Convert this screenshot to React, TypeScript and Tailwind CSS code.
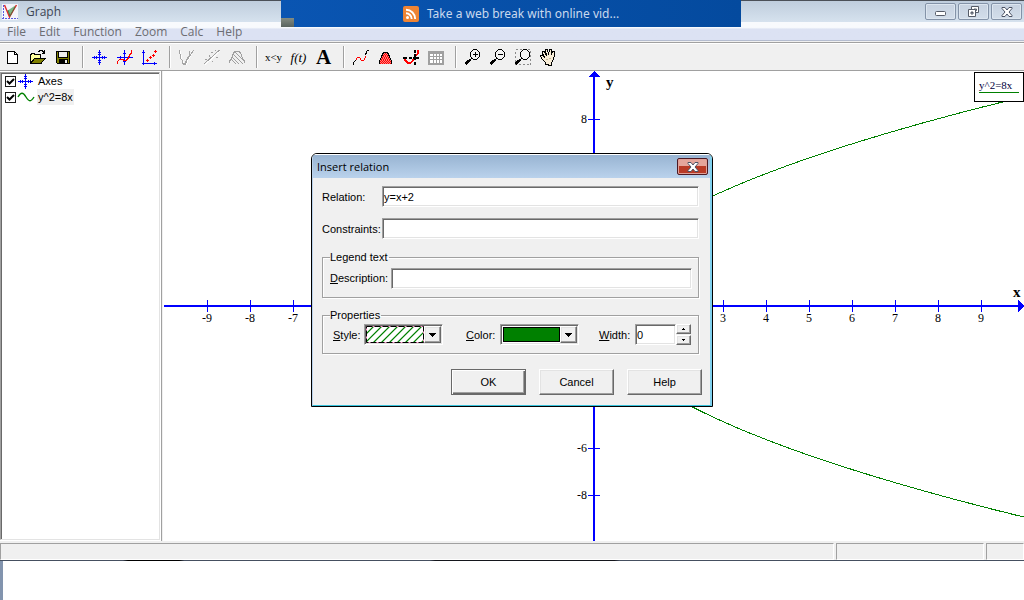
import React from 'react';

const MENUS = ['File', 'Edit', 'Function', 'Zoom', 'Calc', 'Help'];

function Icon({ children }: { children: React.ReactNode }) {
  return (
    <svg width="19" height="18" viewBox="0 0 19 18" fill="none" shapeRendering="crispEdges" aria-hidden="true">
      {children}
    </svg>
  );
}

const AXES_PATH = 'M2 9.5h15M9.5 2v15M4.5 8v3M6.5 8v3M12.5 8v3M14.5 8v3M8 4.5h3M8 6.5h3M8 12.5h3M8 14.5h3';

function Magnifier() {
  return (
    <>
      <path d="M9 10l-2 2" stroke="#000" strokeWidth="1" />
      <path d="M7.500 11.500L2.500 16" stroke="#000" strokeWidth="2.500" />
      <path d="M10.500 1.500h3l3 3v4l-3 3h-3l-3-3v-4z" fill="#f4f4f4" stroke="#000" />
    </>
  );
}

const GROUPS: { label: string; icon: React.ReactNode }[][] = [
  [
    {
      label: 'New',
      icon: (
        <Icon>
          <path d="M4.500 3.500h7l3 3v9h-10z" fill="#fff" stroke="#000" />
          <path d="M11.500 3.500v3h3" stroke="#000" />
        </Icon>
      ),
    },
    {
      label: 'Open',
      icon: (
        <Icon>
          <path d="M2.500 15.500v-9h1v-1h3v1h6v3" fill="#ffff9c" stroke="#000" />
          <path d="M2.500 15.500l4-5h10.500l-4 5z" fill="#808000" stroke="#000" />
          <path d="M10 3.500h1v-1h3v1h1v1h1M16.500 2v4M14 5.500h3" stroke="#000" />
        </Icon>
      ),
    },
    {
      label: 'Save',
      icon: (
        <Icon>
          <path d="M3.500 3.500h13v12h-12l-1-1z" fill="#808000" stroke="#000" />
          <path d="M6 4h8v5H6z" fill="#efefef" />
          <path d="M5.500 4v5.500h9V4" stroke="#000" />
          <path d="M6 11h9v5H6z" fill="#000" />
          <path d="M12 12h2v3h-2z" fill="#efefef" />
        </Icon>
      ),
    },
  ],
  [
    { label: 'Axes', icon: <Icon><path d={AXES_PATH} stroke="#00f" /></Icon> },
    {
      label: 'Insert function',
      icon: (
        <Icon>
          <path d="M2 9.500h16M9.500 2v15M5.500 8v3M13.500 8v3M8 5.500h3M8 13.500h3" stroke="#00f" />
          <path d="M2.500 16v-2l2-3h2l2 1h3l2-2 1-3 2-2v-3" stroke="#f00" />
        </Icon>
      ),
    },
    {
      label: 'Insert point series',
      icon: (
        <Icon>
          <path d="M3.500 2v15M2 15.500h15M2 4.500h3M14.500 14v3" stroke="#00f" />
          <path d="M6 12.500h3M7.500 11v3M9 9.500h3M10.500 8v3M12 7.500h3M13.500 6v3M14 3.500h3M15.500 2v3" stroke="#f00" />
        </Icon>
      ),
    },
  ],
  [
    {
      label: 'Insert tangent',
      icon: (
        <Icon>
          <path d="M3.500 3v3l1 2v3l2 3v2h3l1-3 2-3 2-4v-3M7.500 17l3-6 3-3 3-6" stroke="#fff" />
          <path d="M2.500 2v3l1 2v3l2 3v2l1 1h2l1-3 2-3 1-4v-3M7.500 16l3-6 3-3 3-5" stroke="#a5a5a5" />
        </Icon>
      ),
    },
    {
      label: 'Insert trendline',
      icon: (
        <Icon>
          <path d="M3 17L18 3" stroke="#fff" />
          <path d="M2 16L17.500 2" stroke="#a0a0a0" />
          <path d="M3 11h2v1H3zM7 7h1v2H7zM9 4h2v1H9zM10 13h1v1h-1zM14 9h2v1h-2zM13 2h1v1h-1z" fill="#a0a0a0" />
        </Icon>
      ),
    },
    {
      label: 'Insert shading',
      icon: (
        <Icon>
          <path d="M2.500 15v-2l2-2 2-6 2-2h3l2 2 2 5 2 3v2M6 6l10 10M5 9l7 7M4 11l5 5M8 4l9 9" stroke="#a0a0a0" />
        </Icon>
      ),
    },
  ],
  [
    { label: 'Insert relation', icon: <span className="font-['Liberation_Serif',serif] text-[11px] leading-none">x&lt;y</span> },
    { label: 'Custom functions', icon: <span className="font-['Liberation_Serif',serif] text-[13px] italic leading-none">f(t)</span> },
    { label: 'Insert label', icon: <span className="font-['Liberation_Serif',serif] text-[21px] font-bold leading-none">A</span> },
  ],
  [
    {
      label: 'Length of path',
      icon: (
        <Icon>
          <path d="M4.500 12.500l2-3h2l2 3h2l2-3v-2" stroke="#f00" />
          <path d="M2.500 16.500v-2l2-2M14.500 7l1-3 1-2h1" stroke="#000" />
        </Icon>
      ),
    },
    {
      label: 'Area',
      icon: (
        <Icon>
          <path d="M3.500 16v-3l2-4 1-3 2-2h2l2 2 1 3 2 4v3z" fill="#ff8080" />
          <path
            d="M7 5.500h5M7 7.500h5M6 9.500h7M5 11.500h9M4 13.500h11M4 15.500h11M8 6.500h4M7 8.500h6M6 10.500h8M5 12.500h10M5 14.500h10"
            stroke="#f00"
            strokeDasharray="1 1"
          />
          <path d="M3.500 16v-3l2-4 1-3 2-2h2l2 2 1 3 2 4v3" stroke="#000" />
        </Icon>
      ),
    },
    {
      label: 'Derivative',
      icon: (
        <Icon>
          <path d="M2 9h4v2H2zM8 9h3v2H8zM12 9h6v2h-6zM13 2h2v3h-2zM13 6h2v6h-2zM13 14h2v3h-2z" fill="#000" />
          <path d="M3.500 11l2 3 2 1h2l2-2 2-4 3-3v-4" stroke="#f00" strokeWidth="2" />
          <path d="M12 9h6v2h-6zM13 6h2v6h-2z" fill="#000" />
        </Icon>
      ),
    },
    {
      label: 'Table',
      icon: (
        <Icon>
          <path d="M2 3h16v14H2z" fill="#a0a0a0" />
          <path d="M4 6h12v9H4z" fill="#fff" />
          <path d="M4 8.500h12M4 11.500h12M7.500 6v9M10.500 6v9M13.500 6v9" stroke="#a0a0a0" />
        </Icon>
      ),
    },
  ],
  [
    { label: 'Zoom in', icon: <Icon><Magnifier /><path d="M10 6.500h5M12.500 4v5" stroke="#000" /></Icon> },
    { label: 'Zoom out', icon: <Icon><Magnifier /><path d="M10 6.500h5" stroke="#000" /></Icon> },
    { label: 'Zoom window', icon: <Icon><path d="M2.500 1.500h15v15h-15z" stroke="#8a8a8a" strokeDasharray="2 2" /><Magnifier /></Icon> },
    {
      label: 'Move',
      icon: (
        <Icon>
          <path
            d="M7.500 16.500v-2l-3-3-2-3v-1h2l2 2-2-4v-2h2l2 4-1-4v-2h2l1 5 1-5h2v5l1-3h2v4l-1 4-2 3v3z"
            fill="#f7ecd6"
            stroke="#000"
          />
          <path d="M8 11l2 1M11 10l2 1" stroke="#c8b89a" />
        </Icon>
      ),
    },
  ],
];

function Toolbar() {
  return (
    <div className="flex h-[26px] shrink-0 items-stretch bg-[#f0f0f0]">
      {GROUPS.map((group, g) => (
        <React.Fragment key={g}>
          {g > 0 && <div className="my-[2px] mr-[3px] ml-[7px] w-[2px] border-r border-l border-r-white border-l-[#a0a0a0]" />}
          {group.map((b) => (
            <button key={b.label} type="button" aria-label={b.label} className="flex w-[25px] items-center justify-center">
              {b.icon}
            </button>
          ))}
        </React.Fragment>
      ))}
    </div>
  );
}

function WindowButton({ label, children }: { label: string; children: React.ReactNode }) {
  return (
    <button
      type="button"
      aria-label={label}
      className="flex h-[17px] w-[31px] items-center justify-center rounded-[2px] border border-[#8493a8] bg-linear-to-b from-[#c6d1e0] to-[#d3deea] shadow-[inset_0_0_0_1px_#dde6f0]"
    >
      {children}
    </button>
  );
}

function TitleBar() {
  return (
    <header className="flex h-[22px] shrink-0 items-center justify-between border-t border-[#4b5058] bg-linear-to-b from-[#bfcddd] to-[#d6e2ee] pr-[2px] pl-[2px]">
      <div className="flex items-center gap-[8px]">
        <svg width="16" height="16" viewBox="0 0 16 16" fill="none" aria-hidden="true">
          <path d="M0 0h16v16H0z" fill="#f4f4fb" />
          <path d="M5 7l9-6-6 12z" fill="#7cb787" />
          <path d="M1.500 1v14.500M0 14.500h16" stroke="#5a5ae0" strokeDasharray="2 1" />
          <path d="M2.500 1l5 12L14.500 1" stroke="#e02828" strokeWidth="1.400" />
          <path d="M6 6l2 6 5-9" stroke="#2f7a45" strokeWidth=".8" />
        </svg>
        <span className="text-[12px] leading-[20px] text-[#3c4654]">Graph</span>
      </div>
      <div className="flex gap-[2px]">
        <WindowButton label="Minimize">
          <svg width="13" height="9" viewBox="0 0 13 9"><rect x="1.500" y="4.500" width="10" height="4" rx="1" fill="#fff" stroke="#565c68" /></svg>
        </WindowButton>
        <WindowButton label="Restore">
          <svg width="13" height="11" viewBox="0 0 13 11" fill="#fff" stroke="#565c68">
            <path d="M4.500.5h7v6h-7zM7 3h2.500v1.500H7z" fillRule="evenodd" />
            <path d="M1.500 3.500h7v7h-7zM4 6h2v2H4z" fillRule="evenodd" />
          </svg>
        </WindowButton>
        <WindowButton label="Close"><CloseGlyph /></WindowButton>
      </div>
    </header>
  );
}

function CloseGlyph() {
  return (
    <svg width="12" height="10" viewBox="0 0 12 10" aria-hidden="true">
      <path d="M1 .5h3L6 3 8 .5h3v1L8 5l3 3.500v1H8L6 7 4 9.500H1v-1L4 5 1 1.500z" fill="#fff" stroke="#4c5365" />
    </svg>
  );
}

function TreeItem({ label, selected, children }: { label: string; selected?: boolean; children: React.ReactNode }) {
  return (
    <label className="flex h-[16px] items-center pl-[3px]">
      <span className="grid">
        <input
          type="checkbox"
          defaultChecked
          className="peer col-start-1 row-start-1 size-[11px] appearance-none border border-[#1c1c1c] bg-white"
        />
        <svg width="11" height="11" viewBox="0 0 11 11" fill="none" className="pointer-events-none invisible col-start-1 row-start-1 peer-checked:visible">
          <path d="M2 5l2.500 2.500L9 3" stroke="#000" strokeWidth="2" />
        </svg>
      </span>
      <span className="mr-[2px] ml-[1px]">{children}</span>
      <span className={selected ? 'bg-[#f0f0f0] px-[1px] leading-[16px]' : 'px-[1px] leading-[16px]'}>{label}</span>
    </label>
  );
}

const OX = 431;
const OY = 235;
const UNIT_X = 43;
const UNIT_UP = 23.4;
const UNIT_DOWN = 23.6;

function branch(sign: 1 | -1) {
  const unit = sign > 0 ? UNIT_UP : UNIT_DOWN;
  const points: string[] = [];
  for (let x = 0; x <= 10.2; x += 0.1) {
    points.push(`${(OX + x * UNIT_X).toFixed(1)},${(OY - sign * Math.sqrt(8 * x) * unit).toFixed(1)}`);
  }
  return points.join(' ');
}

function tickY(v: number) {
  return Math.round(OY - v * (v > 0 ? UNIT_UP : UNIT_DOWN));
}

const X_TICKS = [-9, -8, -7, -6, -5, -4, -3, -2, -1, 1, 2, 3, 4, 5, 6, 7, 8, 9];
const X_LABELS = [-9, -8, -7, 3, 4, 5, 6, 7, 8, 9];
const Y_LABELS = [8, -6, -8];

function Plot() {
  return (
    <main className="relative min-w-0 flex-1 bg-white">
      <svg
        viewBox="0 0 861 470"
        preserveAspectRatio="xMaxYMin slice"
        className="block h-full w-full font-['Liberation_Serif',serif]"
        role="img"
        aria-label="Graph of y^2=8x"
      >
        <g shapeRendering="crispEdges">
          <path d={`M1 ${OY}H861M${OX} 3V470`} stroke="#00f" strokeWidth="2" />
          <path d={`M${OX} 0l6 6h-12zM861 ${OY}l-6-6v12z`} fill="#00f" />
          {X_TICKS.map((v) => (
            <path key={v} d={`M${OX + v * UNIT_X + 0.5} ${OY - 6}v12`} stroke="#00f" />
          ))}
          {Y_LABELS.map((v) => (
            <path key={v} d={`M${OX - 6} ${tickY(v) + 0.5}h12`} stroke="#00f" />
          ))}
          <polyline points={branch(1)} fill="none" stroke="#008000" />
          <polyline points={branch(-1)} fill="none" stroke="#008000" />
        </g>
        {X_LABELS.map((v) => (
          <text key={v} x={OX + v * UNIT_X} y={OY + 16} textAnchor="middle" fontSize="12">{v}</text>
        ))}
        {Y_LABELS.map((v) => (
          <text key={v} x={OX - 7} y={tickY(v) + 4} textAnchor="end" fontSize="12">{v}</text>
        ))}
        <text x="443" y="16" fontSize="15" fontWeight="bold">y</text>
        <text x="850" y="226" fontSize="15" fontWeight="bold">x</text>
      </svg>
      <div className="absolute top-[1px] right-0 h-[30px] w-[50px] border border-black bg-white px-[4px] pt-[5px] font-['Liberation_Serif',serif] text-[11px] leading-[14px] text-[#000040]">
        <div className="border-b border-[#008000]">y^2=8x</div>
      </div>
    </main>
  );
}

const SUNKEN = 'border border-t-[#a0a0a0] border-l-[#a0a0a0] border-r-white border-b-white';
const INPUT =
  'h-[21px] min-w-0 border border-t-[#a0a0a0] border-l-[#a0a0a0] border-r-white border-b-white bg-white px-[1px] text-[11px] shadow-[inset_1px_1px_0_#696969,inset_-1px_-1px_0_#e3e3e3] outline-none';
const RAISED = 'border border-t-white border-l-white border-r-[#696969] border-b-[#696969] bg-[#f0f0f0] shadow-[inset_-1px_-1px_0_#a0a0a0,inset_1px_1px_0_#e3e3e3]';
const FIELDSET = 'border border-[#a0a0a0] shadow-[1px_1px_0_#fff,inset_1px_1px_0_#fff]';

function SwatchSelect({ id, value, children }: { id: string; value: string; children: React.ReactNode }) {
  return (
    <div className="grid h-[21px] w-[79px]">
      <select
        id={id}
        defaultValue={value}
        className={`col-start-1 row-start-1 appearance-none outline-none ${SUNKEN} bg-white shadow-[inset_1px_1px_0_#696969,inset_-1px_-1px_0_#e3e3e3]`}
      >
        <option value={value} aria-label={value} />
      </select>
      <div className="pointer-events-none col-start-1 row-start-1 flex items-center justify-between py-[2px] pr-[2px] pl-[2px]">
        {children}
        <span className={`flex h-full w-[17px] items-center justify-center ${RAISED}`}>
          <svg width="7" height="4" viewBox="0 0 7 4" shapeRendering="crispEdges"><path d="M0 0h7L3.500 4z" /></svg>
        </span>
      </div>
    </div>
  );
}

function DialogButton({ children, primary }: { children: string; primary?: boolean }) {
  return (
    <button
      type={primary ? 'submit' : 'button'}
      className={
        primary
          ? 'h-[26px] w-[75px] border border-[#696969] bg-[#f0f0f0] text-[11px] shadow-[inset_1px_1px_0_#fff,inset_-1px_-1px_0_#696969,inset_-2px_-2px_0_#a0a0a0]'
          : `h-[26px] w-[75px] text-[11px] ${RAISED}`
      }
    >
      {children}
    </button>
  );
}

function RelationDialog() {
  return (
    <form
      role="dialog"
      aria-label="Insert relation"
      onSubmit={(e) => e.preventDefault()}
      className="absolute top-[153px] left-[311px] w-[402px] overflow-hidden rounded-t-[6px] border border-black bg-[#f0f0f0] font-['Liberation_Sans',sans-serif] text-[11px] text-black"
    >
      <div className="border-t border-r-2 border-b border-l border-t-white border-r-[#7fd0ee] border-b-[#38c3dc] border-l-[#b9d1ea]">
        <div className="flex h-[23px] items-center justify-between bg-linear-to-b from-[#98b4d2] to-[#bad2ec] pr-[2px] pl-[4px]">
          <span className="pt-[2px] font-['Open_Sans','Noto_Sans',sans-serif] text-[11px]">Insert relation</span>
          <button
            type="button"
            aria-label="Close"
            className="flex h-[17px] w-[31px] items-center justify-center rounded-[2px] border border-[#4d1a24] bg-linear-to-b from-[#e5a59b] from-45% to-[#b93a26] to-50% shadow-[inset_0_0_0_1px_#e0a098]"
          >
            <CloseGlyph />
          </button>
        </div>
        <div className="pt-[8px] pr-[11px] pb-[10px] pl-[9px]">
          <div className="grid grid-cols-[60px_1fr] items-center gap-y-[11px]">
            <label htmlFor="relation" className="pt-[2px]">Relation:</label>
            <input id="relation" defaultValue="y=x+2" className={INPUT} />
            <label htmlFor="constraints" className="pt-[2px]">Constraints:</label>
            <input id="constraints" className={INPUT} />
          </div>
          <fieldset className={`mt-[11px] pt-[4px] pr-[6px] pb-[8px] pl-[7px] ${FIELDSET}`}>
            <legend className="pr-[1px] leading-[14px]">Legend text</legend>
            <div className="grid grid-cols-[61px_1fr] items-center">
              <label htmlFor="description"><u>D</u>escription:</label>
              <input id="description" className={INPUT} />
            </div>
          </fieldset>
          <fieldset className={`mt-[10px] pt-[2px] pb-[8px] pl-[7px] ${FIELDSET}`}>
            <legend className="pr-[1px] leading-[14px]">Properties</legend>
            <div className="flex items-center pl-[3px]">
              <label htmlFor="style" className="w-[31px] pt-[2px]"><u>S</u>tyle:</label>
              <SwatchSelect id="style" value="Diagonal">
                <svg width="58" height="17" viewBox="0 0 58 17" fill="none">
                  <path d="M0 0h58v17H0z" fill="#fff" />
                  <path d="M0 8L8 0M0 16L16 0M7 17L24 0M15 17L32 0M23 17L40 0M31 17L48 0M39 17L56 0M47 17L58 6M55 17l3-3" stroke="#008000" strokeWidth="1.200" />
                  <path d="M.5.5h57v16H.5z" stroke="#ff9ccc" />
                  <path d="M.5.5h57v16H.5z" stroke="#000" strokeDasharray="6 2" />
                </svg>
              </SwatchSelect>
              <label htmlFor="color" className="ml-[23px] w-[34px] pt-[2px]"><u>C</u>olor:</label>
              <SwatchSelect id="color" value="Green">
                <span className="ml-[1px] h-[15px] w-[57px] border border-black bg-[#008000]" />
              </SwatchSelect>
              <label htmlFor="width" className="ml-[20px] w-[36px] pt-[2px]"><u>W</u>idth:</label>
              <input id="width" defaultValue="0" className={`w-[41px] ${INPUT}`} />
              <div className="flex h-[21px] w-[15px] flex-col justify-between">
                <button type="button" aria-label="Increase width" className={`flex h-[10px] items-center justify-center ${RAISED}`}>
                  <svg width="3" height="2" viewBox="0 0 3 2" shapeRendering="crispEdges"><path d="M1 0h1v1h1v1H0V1h1z" /></svg>
                </button>
                <button type="button" aria-label="Decrease width" className={`flex h-[10px] items-center justify-center ${RAISED}`}>
                  <svg width="3" height="2" viewBox="0 0 3 2" shapeRendering="crispEdges"><path d="M0 0h3v1H2v1H1V1H0z" /></svg>
                </button>
              </div>
            </div>
          </fieldset>
          <div className="mt-[15px] -mr-[3px] flex justify-end gap-[13px]">
            <DialogButton primary>OK</DialogButton>
            <DialogButton>Cancel</DialogButton>
            <DialogButton>Help</DialogButton>
          </div>
        </div>
      </div>
    </form>
  );
}

export default function App() {
  return (
    <div className="relative flex h-screen flex-col overflow-hidden bg-white font-['Open_Sans','Noto_Sans',sans-serif] text-black">
      <TitleBar />
      <nav className="flex h-[19px] shrink-0 items-end gap-[13px] border-b border-[#b4bccf] bg-linear-to-b from-[#f8fafd] from-30% to-[#dce2f3] to-40% pl-[7px] text-[12px] leading-[17px] text-[#6d6d72]">
        {MENUS.map((m) => (
          <button key={m} type="button">{m}</button>
        ))}
      </nav>
      <div className="h-[3px] shrink-0 border-y border-t-[#f0f0f0] border-b-white bg-[#a0a0a0]" />
      <Toolbar />
      <div className="flex min-h-0 flex-1 border-t border-[#a0a0a0] bg-white">
        <aside className="my-[1px] w-[160px] shrink-0 border border-t-[#a0a0a0] border-r-[#e3e3e3] border-b-[#e3e3e3] border-l-[#a0a0a0] bg-white font-['Liberation_Sans',sans-serif] text-[11px] shadow-[inset_1px_1px_0_#696969]">
          <div className="pl-[1px]">
            <TreeItem label="Axes">
              <svg width="18" height="16" viewBox="1 1 18 16" shapeRendering="crispEdges"><path d={AXES_PATH} stroke="#00f" /></svg>
            </TreeItem>
            <TreeItem label="y^2=8x" selected>
              <svg width="18" height="16" viewBox="0 0 18 16" fill="none"><path d="M1 8C4 3 6 3 9 8s5 5 8 0" stroke="#008000" strokeWidth="1.400" /></svg>
            </TreeItem>
          </div>
        </aside>
        <div className="ml-[1px] w-[2px] shrink-0 border-l border-[#a0a0a0] bg-[#f0f0f0]" />
        <Plot />
      </div>
      <footer className="flex h-[19px] shrink-0 gap-[2px] bg-[#f0f0f0] pt-[2px]">
        <div className={`flex-1 ${SUNKEN}`} />
        <div className={`w-[148px] ${SUNKEN}`} />
        <div className={`w-[38px] ${SUNKEN}`} />
      </footer>
      <div className="h-px shrink-0 bg-[linear-gradient(90deg,#454f60_12%,#000_12.500%,#000_17.500%,#454f60_18%,#454f60_42%,#14161c_42.500%,#14161c_60%,#454f60_60.500%)]" />
      <div className="h-[39px] shrink-0 border-l-[3px] border-[#8294ae] bg-white" />

      <div className="absolute top-0 left-[281px] flex h-[27px] w-[460px] items-center justify-center gap-[8px] bg-linear-to-r from-[#0a55b2] to-[#044a9e] text-[12px] text-[#c9d9ee]">
        <span className="absolute bottom-0 left-0 h-[9px] w-[13px] bg-linear-to-b from-[#848c82] to-[#59645f]" />
        <svg width="16" height="16" viewBox="0 0 16 16" fill="none" aria-hidden="true">
          <rect width="16" height="16" rx="2" fill="#ee8434" />
          <circle cx="4.500" cy="11.500" r="1.500" fill="#fff" />
          <path d="M3 7.300a5.700 5.700 0 0 1 5.700 5.700M3 3.800A9.200 9.200 0 0 1 12.200 13" stroke="#fff" strokeWidth="1.900" />
        </svg>
        <span className="font-['Noto_Sans',sans-serif]">Take a web break with online vid...</span>
      </div>
      <RelationDialog />
    </div>
  );
}
